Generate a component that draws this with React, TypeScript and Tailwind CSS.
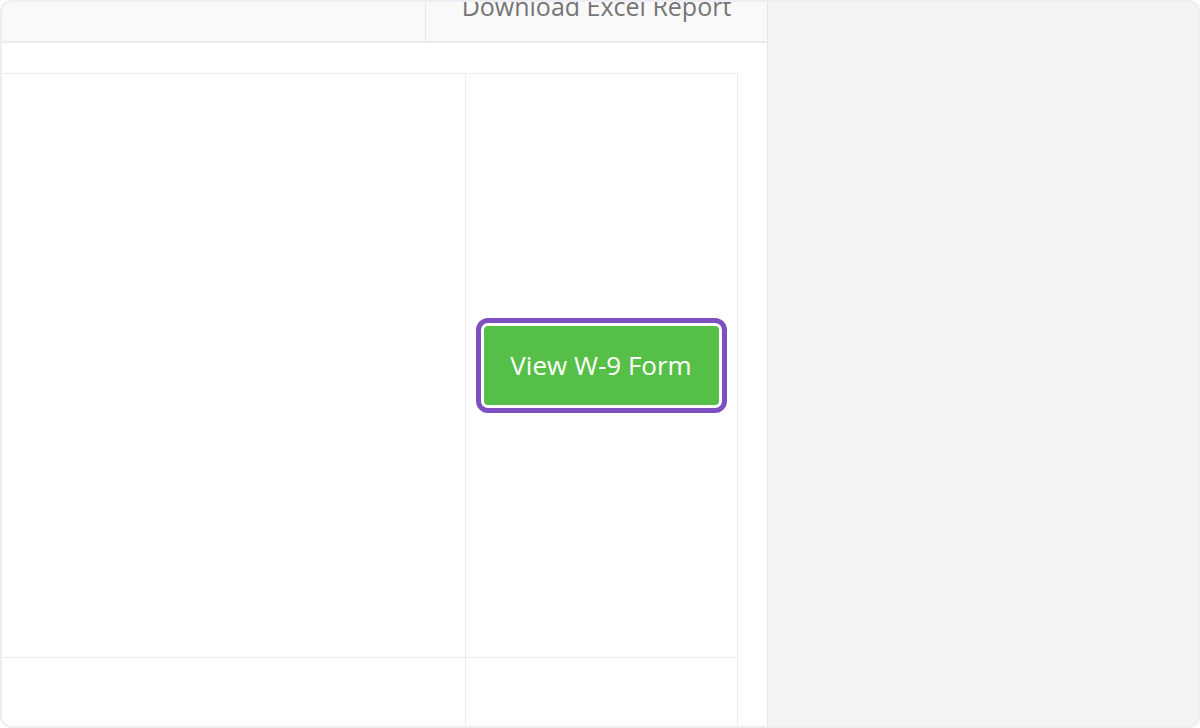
const App = () => {
  return (
    <div
      className="h-[728px] w-[1200px] overflow-hidden rounded-[12px] border-2 border-[#eeedf3] bg-[#f4f4f4] flex"
      style={{ fontFamily: '"Open Sans", "Noto Sans", sans-serif' }}
    >
      <div className="w-[766px] shrink-0 bg-white border-r border-[#e6e6e6] flex flex-col">
        <div className="h-[41px] shrink-0 bg-[#f9f9f9] border-b-2 border-[#ebebeb] flex">
          <div className="w-[424px] border-r border-[#e6e6e6]" />
          <div className="flex-1 flex justify-center overflow-hidden">
            <span className="text-[25px] leading-[34px] mt-[-13px] text-[#757575] whitespace-nowrap">
              Download Excel Report
            </span>
          </div>
        </div>
        <div className="flex-1 pt-[30px] pr-[29px] ml-[-10px]">
          <div className="h-full border-t border-r border-l border-[#ececec] flex flex-col">
            <div className="h-[584px] flex border-b border-[#ececec]">
              <div className="w-[473px] border-r border-[#ececec]" />
              <div className="flex-1 flex items-center justify-center">
                <button className="h-[79px] w-[235px] mt-[-1px] rounded-[4px] bg-[#56bf47] text-white text-[26px] outline-[5px] outline-solid outline-[#7e4fc1] outline-offset-[3px] ml-[-1px]">
                  View W-9 Form
                </button>
              </div>
            </div>
            <div className="flex-1 flex">
              <div className="w-[473px] border-r border-[#ececec]" />
              <div className="flex-1" />
            </div>
          </div>
        </div>
      </div>
      <div className="flex-1" />
    </div>
  );
};

export default App;
